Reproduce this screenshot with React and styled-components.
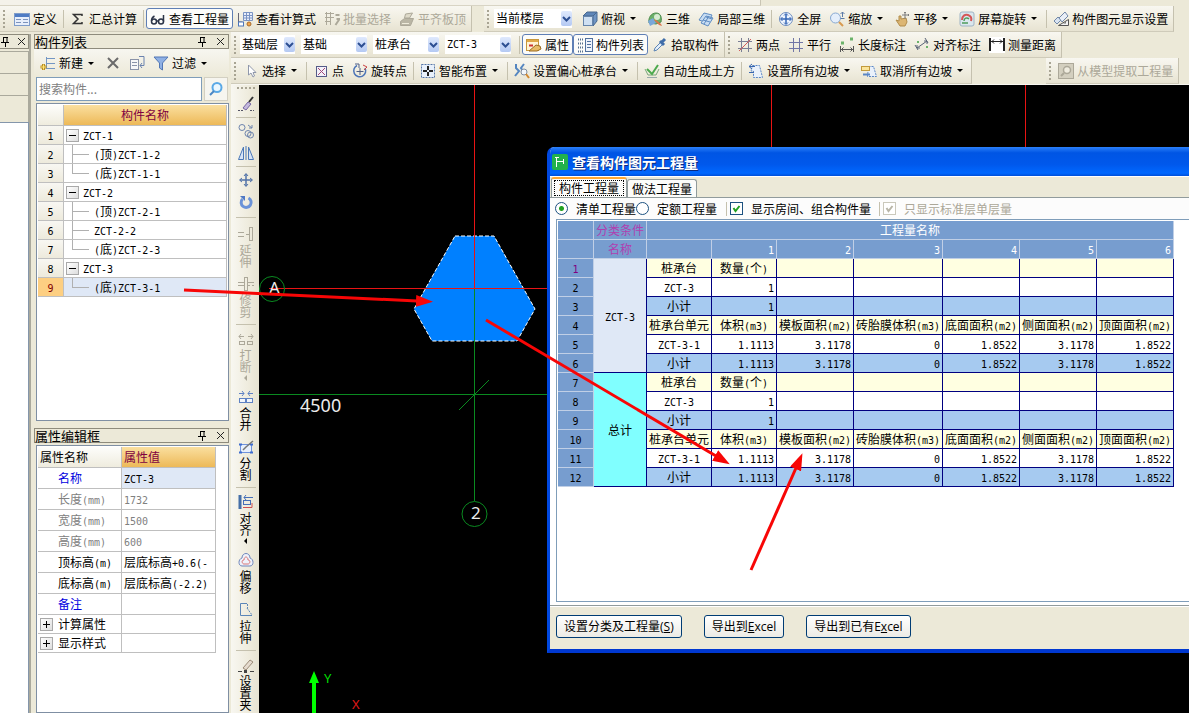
import { Fragment } from "react";
import styled, { createGlobalStyle, css } from "styled-components";

const GlobalStyle = createGlobalStyle`
  * {
    box-sizing: border-box;
  }

  body {
    margin: 0;
    overflow: hidden;
    background: #ece9d8;
    color: #000;
    font-family: "Noto Sans CJK SC", sans-serif;
    font-size: 12px;
    line-height: 16px;
  }

  button, input, select {
    font: inherit;
    color: inherit;
    margin: 0;
  }
`;

/*
  Text
*/
const Latin = styled.span`
  font-family: "DejaVu Sans Mono", monospace;
  font-size: 10px;
  line-height: 10px;
`;

// Latin runs get the half-width face, the rest stays in the CJK face
function Mixed({ text }) {
  return String(text)
    .split(/([\x20-\x7e]+)/)
    .filter(Boolean)
    .map((part, i) =>
      /^[\x20-\x7e]/.test(part) ? <Latin key={i}>{part}</Latin> : <Fragment key={i}>{part}</Fragment>
    );
}

/*
  Icons
*/
const glyphs = {
  define: (
    <>
      <rect x="0.5" y="2.5" width="15" height="12" fill="#e8effb" stroke="#7f9cc9" />
      <rect x="1" y="3" width="14" height="3" fill="#4f7cc4" />
      <path d="M2 8.5h5M2 11.5h5M9 8.5h5M9 11.5h5" stroke="#7d94bd" />
    </>
  ),
  sum: <path d="M12 5V3.5H3.5L8 8l-4.500 4.500H12V11" fill="none" stroke="#333" strokeWidth="1.500" />,
  glasses: (
    <g fill="none" stroke="#2c3548" strokeWidth="1.500">
      <circle cx="4" cy="10.500" r="2.500" />
      <circle cx="11" cy="10.500" r="2.500" />
      <path d="M1.500 10c0-3 1-4 3-5M13.500 10.500V4" />
      <path d="M6.500 10h2" />
    </g>
  ),
  formula: (
    <>
      <path d="M6.500 1.500h9v8h-9z" fill="#e9eefb" stroke="#7b94c4" />
      <path d="M6 4.500h9M6 7h9M9.500 1v8M12.500 1v8" stroke="#7b94c4" />
      <path d="M1.500 2v9h4" fill="none" stroke="#667" />
      <rect x="1.500" y="11" width="5" height="4" fill="#fff" stroke="#4c76bb" />
      <circle cx="12" cy="13" r="2" fill="#f2a54a" stroke="#a76a2c" />
    </>
  ),
  batch: (
    <g fill="none" stroke="#aca899">
      <path d="M1 2.500h9M1 6.500h9M1 10.500h6M2.500 1v13M6.500 1v13" />
      <path d="M11.500 4h4M12.500 8h3l-4 6" strokeWidth="2" />
    </g>
  ),
  slab: (
    <g fill="#bab6a5" stroke="#aca899">
      <path d="M1.500 10.500l4-3h9l-3 7h-10z" />
      <path d="M5.500 7l1-4 7-1-3 5z" fill="#dedac9" />
      <path d="M3 12.500h7" stroke="#efecdc" />
    </g>
  ),
  cube: (
    <>
      <path d="M1 5l4-4h10l-4 4z" fill="#5e86b8" stroke="#48688f" />
      <path d="M11 5l4-4v9l-4 5z" fill="#6f95c4" stroke="#48688f" />
      <rect x="1.500" y="5.500" width="9" height="9" fill="#cfe0f2" stroke="#6685ab" />
    </>
  ),
  view3d: (
    <>
      <path d="M2 12c-1-5 2-10 7-10s6 5 5 9l-5 2z" fill="#6bb06a" stroke="#4f8d50" />
      <path d="M1 10l5-3 3 5-6 3z" fill="#7aa7d9" />
      <path d="M8 8l6 5 1 2-3-1-5-5z" fill="#d9764d" />
      <circle cx="10" cy="6" r="3" fill="#d7ecd2" />
    </>
  ),
  part3d: (
    <g fill="#c7dcf2" stroke="#5f8cc2">
      <path d="M1 9l5-7 8 2-4 8z" />
      <path d="M3 12l5-7 7 2-5 8z" />
      <path d="M6 13l5-8M5 9l7 2M8 6l6 2" />
    </g>
  ),
  full: (
    <>
      <circle cx="8" cy="8" r="6.500" fill="#eef4fd" stroke="#6b8cc0" />
      <path d="M8 3v10M3 8h10" stroke="#3565b5" strokeWidth="1.500" />
      <path d="M6 4.500L8 2.500l2 2M6 11.500l2 2 2-2M4.500 6l-2 2 2 2M11.500 6l2 2-2 2" fill="none" stroke="#3565b5" />
    </>
  ),
  zoom: (
    <>
      <circle cx="6.500" cy="7" r="5" fill="#e4eefb" stroke="#88a9d2" />
      <path d="M10 11l4 4" stroke="#d89a50" strokeWidth="2" />
      <path d="M13.500 1v5M11.500 3l2-2 2 2M11.500 7.500h4" fill="none" stroke="#5c7ba8" />
    </>
  ),
  hand: (
    <>
      <path d="M2 9l3 1V5l2 0 0 3 5-1 1 4-2 4H6z" fill="#dcb673" stroke="#b28d4c" />
      <path d="M11 1v7M8 4h7M10 2l1-1 1 1M14 3l1 1-1 1" fill="none" stroke="#7c7c7c" />
    </>
  ),
  orbit: (
    <>
      <rect x="1" y="1" width="14" height="14" rx="2" fill="#dbe7ee" stroke="#9fb4c5" />
      <path d="M3 9c0-4 3-6 6-5s4 3 3 6" fill="none" stroke="#d45757" strokeWidth="2" />
      <path d="M5 10c0-3 3-4 5-2M9 12H3" fill="none" stroke="#4f9d5c" strokeWidth="1.500" />
    </>
  ),
  display: (
    <>
      <path d="M1 10l4-4 3 3-4 4z" fill="#d9e4f2" stroke="#7187a8" />
      <path d="M6 7l6-6 3 4-6 6z" fill="#e9eef6" stroke="#7187a8" />
      <path d="M5.500 14.500h10v-6z" fill="#f3f3f3" stroke="#555" />
      <path d="M10 12.500h3v-2z" fill="#777" />
    </>
  ),
  property: (
    <>
      <rect x="0.500" y="2.500" width="12" height="11" fill="#fff4d6" stroke="#c7973c" />
      <rect x="1" y="3" width="11" height="2" fill="#e0a94a" />
      <path d="M3 14l7-6 4 1 1 3-4 2z" fill="#e7bb67" stroke="#9b6b22" />
      <path d="M3 8.500h4" stroke="#c33" strokeWidth="2" />
    </>
  ),
  list: (
    <>
      <path d="M1 2.500h3M1 6.500h3M1 10.500h3M1 14.500h3M5 2.500h2M5 6.500h2M5 10.500h2M5 14.500h2" stroke="#56708f" strokeWidth="2" strokeDasharray="1 1" />
      <rect x="8.500" y="1.500" width="7" height="13" fill="#eef3fb" stroke="#51719f" />
      <path d="M10 4.500h4M10 7.500h4M10 10.500h4" stroke="#51719f" />
    </>
  ),
  dropper: (
    <>
      <path d="M2 14l1-3 6-6 2 2-6 6z" fill="#e3eefa" stroke="#5d85b5" />
      <path d="M8 4l4 4M10 5l3-3" stroke="#3f6da9" strokeWidth="3" />
    </>
  ),
  twoPoint: (
    <>
      <path d="M4.500 1v14M11.500 1v14M1 4.500h14M1 11.500h14" stroke="#7b7f95" />
      <path d="M2 14L14 2" stroke="#d35c5c" />
    </>
  ),
  parallel: <path d="M5.500 1v14M11.500 1v14M1 5.500h14M1 11.500h14" stroke="#7176a6" />,
  length: (
    <>
      <path d="M2 6h3M11 2h3" stroke="#6bb36b" strokeWidth="3" />
      <path d="M1.500 9v6M14.500 9v6M2 12.500h12M4.500 10.500l-2 2 2 2M11.500 10.500l2 2-2 2" fill="none" stroke="#555" />
    </>
  ),
  aligned: (
    <>
      <path d="M3 5h2M12 10h2" stroke="#6bb36b" strokeWidth="2" />
      <path d="M1 8l3 5M11 1l3 5M3 11l10-7M3 8v3h3M10 4h3v3" fill="none" stroke="#5a6478" />
    </>
  ),
  measure: (
    <>
      <rect width="16" height="16" fill="#fff" />
      <path d="M1 1v13M15 1v13" stroke="#222" strokeWidth="2" />
      <path d="M2 4.500h12M5 2.500l-2 2 2 2M11 2.500l2 2-2 2" fill="none" stroke="#222" />
    </>
  ),
  cursor: <path d="M5.500 2v10l2.500-2 2 4 1.500-1-1.500-3.500h3z" fill="#fff" stroke="#8f97ab" />,
  point: (
    <>
      <rect x="3.500" y="3.500" width="10" height="10" fill="#f4f1fa" stroke="#555b88" />
      <path d="M5 5l7 7M12 5l-7 7" stroke="#a04a78" />
    </>
  ),
  rotatePoint: (
    <>
      <path d="M5 2.500A6 6 0 1 0 13 5" fill="none" stroke="#4c74b7" strokeWidth="1.500" />
      <path d="M3 1h4v4M8 5v7M4.500 8.500h7" fill="none" stroke="#4e5e86" />
      <path d="M11 2l4 2-3 3" fill="none" stroke="#c44" />
    </>
  ),
  smart: (
    <>
      <rect x="1.500" y="1.500" width="13" height="13" fill="#e8f0fb" stroke="#5676a8" strokeDasharray="2 1" />
      <path d="M8 3v4M8 9v4M3 8h4M9 8h4" stroke="#222" strokeWidth="2" />
    </>
  ),
  eccentric: (
    <>
      <path d="M2 1v4l3 3-4 5M10 1L7 5l2 3" fill="none" stroke="#5586c0" strokeWidth="2" />
      <circle cx="10" cy="9" r="3" fill="#f3f7fb" stroke="#7f8da0" />
      <path d="M12 11l3 4" stroke="#d4892f" strokeWidth="2" />
    </>
  ),
  earth: (
    <>
      <path d="M1 6l3 6h8l3-6" fill="none" stroke="#7aa67a" />
      <path d="M3 6l5 5 6-9" fill="none" stroke="#4caa4d" strokeWidth="2" />
      <path d="M3 14.500h10" stroke="#9aa" />
    </>
  ),
  slopeSet: (
    <>
      <path d="M4.500 2.500h7l3 12h-9V8H3z" fill="#eaf1fb" stroke="#5a86c6" strokeDasharray="2 1" />
      <path d="M1 3.500h6M1 9.500h5M4 1L1 3.500 4 6" fill="none" stroke="#3a67b0" />
    </>
  ),
  slopeClear: (
    <>
      <path d="M7.500 3.500h5l3 10h-9z" fill="#eaf1fb" stroke="#5a86c6" strokeDasharray="2 1" />
      <rect x="0.500" y="3.500" width="8" height="4" fill="#fbe59a" stroke="#c29a3d" />
      <path d="M2 11.500h7" stroke="#5a86c6" strokeWidth="2" />
    </>
  ),
  extract: (
    <g fill="none" stroke="#aca899">
      <rect x="0.500" y="0.500" width="15" height="15" fill="#d3cfbf" />
      <circle cx="9" cy="7" r="3.500" fill="#efecdf" strokeWidth="1.500" />
      <path d="M6 10l-3 3" strokeWidth="2" />
    </g>
  ),
  add: (
    <>
      <path d="M7 3.500h8M7 8.500h8M7 13.500h8M6.500 2v12" stroke="#7396c4" />
      <path d="M3.500 9v6M0.500 12h6" stroke="#b88e22" strokeWidth="3" />
      <path d="M3.500 9.500v5M1 12h5" stroke="#ffe477" />
    </>
  ),
  remove: <path d="M3 3l10 10M13 3L3 13" stroke="#6b6b6b" strokeWidth="2" />,
  copyTo: (
    <>
      <rect x="1.500" y="4.500" width="8" height="10" fill="#f7f7f7" stroke="#8a93a8" />
      <path d="M3 7.500h5M3 10.500h5" stroke="#8a93a8" />
      <path d="M10 1.500h5v9h-4M13 8l-2 2.500 2 2.500" fill="none" stroke="#6b83af" />
    </>
  ),
  funnel: <path d="M1 2h14L9.500 8v7l-3-2V8z" fill="#8fb0e4" stroke="#5277b5" />,
  search: (
    <>
      <circle cx="9" cy="6.500" r="4.500" fill="#eaf7ff" stroke="#5aa9e6" strokeWidth="2" />
      <path d="M6 10l-4 4" stroke="#4b86c4" strokeWidth="2" />
    </>
  ),
  brush: (
    <>
      <path d="M0 14.500h5M12 14.500h4" stroke="#556" strokeDasharray="2 1" />
      <path d="M5 12l5-6 3 2-5 6z" fill="#c5b9de" stroke="#7566a2" />
      <path d="M11 6l4-5" stroke="#333" strokeWidth="2" />
    </>
  ),
  duplicate: (
    <g fill="none" stroke="#6d84ad">
      <circle cx="4" cy="4.500" r="3" />
      <circle cx="10" cy="10.500" r="3" />
      <circle cx="12.500" cy="12" r="3" />
      <path d="M10 2l4 3M14 2v3h-3" />
    </g>
  ),
  mirror: (
    <g fill="#d7e4f6" stroke="#4a78b8">
      <path d="M5.500 2v12.500h-5z" />
      <path d="M10.500 2v12.500h5z" />
      <path d="M8 1v14" />
    </g>
  ),
  move: (
    <g fill="none" stroke="#5273a8">
      <path d="M8 2v12M2 8h12" strokeWidth="1.500" />
      <path d="M6 4l2-2.500L10 4M6 12l2 2.500 2-2.500M4 6L1.500 8 4 10M12 6l2.500 2L12 10" />
    </g>
  ),
  rotate: (
    <>
      <path d="M4.500 5a5 5 0 1 0 6-1" fill="none" stroke="#6b93d8" strokeWidth="3" />
      <path d="M2 2h5v5z" fill="#4f78c4" />
    </>
  ),
  extend: (
    <g fill="none" stroke="#aca899">
      <path d="M0 6.500h6M0 10.500h6M8 8.500h3" />
      <rect x="11.500" y="1.500" width="3" height="13" />
    </g>
  ),
  trim: (
    <g fill="none" stroke="#aca899">
      <rect x="6.500" y="1.500" width="3" height="13" />
      <path d="M0 6.500h6M0 9.500h6M10 6.500h6M10 9.500h2M14 9.500h2" />
    </g>
  ),
  breakUp: (
    <g fill="none" stroke="#aca899">
      <path d="M1 5.500h5M3 3L1 5.500 3 8M10 5.500h5M13 3l2 2.500L13 8" />
      <rect x="1.500" y="10.500" width="5" height="3" />
      <rect x="9.500" y="10.500" width="5" height="3" />
    </g>
  ),
  merge: (
    <g fill="none" stroke="#5f82c4">
      <path d="M1 4.500h5M4 2l2 2.500L4 7M10 4.500h5M12 2l-2 2.500L12 7" />
      <rect x="1.500" y="9.500" width="6" height="4" fill="#f2f6fc" />
      <rect x="8.500" y="9.500" width="6" height="4" fill="#f2f6fc" />
    </g>
  ),
  split: (
    <>
      <path d="M2.500 5.500h11v8h-11z" fill="#e7effc" stroke="#6f92dc" />
      <path d="M1 5.500h3M12 5.500h3M1 13.500h3M12 13.500h3" stroke="#3d6cd0" strokeWidth="2" />
      <path d="M5 11l3-3 7-6" fill="none" stroke="#777" strokeWidth="1.500" />
    </>
  ),
  align: (
    <>
      <path d="M2 1v14" stroke="#456fa8" strokeWidth="3" />
      <rect x="5.500" y="6.500" width="7" height="4" fill="none" stroke="#456fb8" />
      <path d="M15 3.500H6M8 1L6 3.500 8 6" fill="none" stroke="#456fb8" />
      <path d="M5 13.500h9V9" fill="none" stroke="#cf5151" />
    </>
  ),
  offset: (
    <g fill="none">
      <path d="M4 6c0-6 8-6 8 0 4 1 4 8 0 8H4c-4 0-4-7 0-8z" fill="#eef2fb" stroke="#6e86bb" />
      <path d="M6 8c0-4 4-4 4 0 3 0 2 4 0 4H6c-2 0-3-4 0-4z" stroke="#da7777" />
    </g>
  ),
  stretch: (
    <g fill="none" stroke="#5b86b8">
      <path d="M9 1.500H2.500v12H14" />
      <path d="M9.500 2v4M9 6l5 7" strokeDasharray="2 1" />
    </g>
  ),
  grip: (
    <>
      <path d="M5 11l7-8 3 2-7 8z" fill="#e6dccf" stroke="#9b8b78" />
      <path d="M0 14.500h4M12 14.500h4" stroke="#444" />
      <rect x="6" y="13" width="3" height="3" fill="#444" />
    </>
  ),
  pin: <path d="M3 1.500h5M3.500 1v5M7 1v5M1 6.500h8M5.500 7v4" fill="none" stroke="#000" />,
  close: <path d="M2 2l7 7M9 2L2 9" stroke="#222" />,
};

const Svg = styled.svg`
  display: block;
  flex: none;
`;

function Icon({ name, size = 16, box = 16 }) {
  return (
    <Svg width={size} height={size} viewBox={`0 0 ${box} ${box}`} aria-hidden="true">
      {glyphs[name]}
    </Svg>
  );
}

/*
  Frame of the window
*/
const Page = styled.div`
  display: flex;
  flex-direction: column;
  height: 100vh;
  background: #ece9d8;
`;

const TopEdge = styled.div`
  flex: none;
  width: 64%;
  height: 6px;
  background: #f4f2ea;
  border-right: 1px solid #c9c5b4;
  border-bottom: 1px solid #d8d4c4;
`;

const ToolRow = styled.div`
  display: flex;
  flex: none;
  gap: ${(p) => p.$gap || 0}px;
  height: 26px;
  white-space: nowrap;
`;

const Toolbar = styled.div`
  display: flex;
  align-items: center;
  flex: none;
  padding-right: 1px;
  background: linear-gradient(#f8f7f1, #efecde 60%, #e7e3d2);
  border-right: 1px solid #c5c1af;
  border-bottom: 1px solid #cfcbba;
`;

const Grip = styled.span`
  flex: none;
  width: 2px;
  height: 18px;
  margin: 0 ${(p) => p.$after ?? 3}px 0 3px;
  background: repeating-linear-gradient(#a8a493 0 2px, transparent 2px 4px);
`;

const ToolButton = styled.button`
  display: flex;
  align-items: center;
  flex: none;
  gap: 3px;
  height: 21px;
  padding: 0 4px;
  border: 0;
  background: none;

  &:disabled {
    color: #aca899;
  }

  ${(p) =>
    p.$pressed &&
    css`
      padding: 0 3px;
      border: 1px solid #5f7fb5;
      border-radius: 3px;
      background: #fcfcfa;
    `}
`;

const Caret = styled.span`
  flex: none;
  width: 0;
  margin: 0 3px 0 2px;
  border: 3px solid transparent;
  border-top-color: #000;
  border-bottom-width: 0;
`;

const Divider = styled.span`
  flex: none;
  width: 1px;
  height: 18px;
  margin: 0 2px;
  background: #c5c1ae;
`;

const Combo = styled.span`
  display: grid;
  flex: none;
  width: ${(p) => p.$width}px;
  height: 19px;
  margin-right: 6px;
  background: #fff;
`;

const ComboSelect = styled.select`
  grid-area: 1 / 1;
  appearance: none;
  min-width: 0;
  padding: 0 12px 0 2px;
  border: 0;
  border-radius: 0;
  background: none;
  font-family: "DejaVu Sans Mono", "Noto Sans CJK SC", sans-serif;
  font-size: ${(p) => (p.$latin ? 10 : 12)}px;
  line-height: 18px;
`;

const ComboArrow = styled.span`
  grid-area: 1 / 1;
  display: grid;
  place-items: center;
  align-self: center;
  justify-self: end;
  width: 11px;
  height: 15px;
  border-radius: 2px;
  background: linear-gradient(#dfe9fd, #b4c9f3);
  pointer-events: none;
`;

function Tool({ icon, label, caret, pressed, disabled }) {
  return (
    <ToolButton type="button" $pressed={pressed} disabled={disabled}>
      <Icon name={icon} />
      {label}
      {caret && <Caret />}
    </ToolButton>
  );
}

function Dropdown({ value, width, label, latin }) {
  return (
    <Combo $width={width}>
      <ComboSelect aria-label={label} $latin={latin} defaultValue={value}>
        <option>{value}</option>
      </ComboSelect>
      <ComboArrow>
        <Svg width="9" height="8" viewBox="0 0 9 8">
          <path d="M1 2l3.500 3.500L8 2" fill="none" stroke="#2d4f92" strokeWidth="2" />
        </Svg>
      </ComboArrow>
    </Combo>
  );
}

/*
  Docked panels on the left
*/
const Workspace = styled.div`
  display: flex;
  flex: 1;
  min-height: 0;
`;

const Sliver = styled.div`
  display: flex;
  flex-direction: column;
  flex: none;
  width: 31px;
  margin: 2px 3px 0 0;
  border-right: 2px solid #aaa99c;
`;

const SliverHead = styled.div`
  display: flex;
  align-items: center;
  gap: 5px;
  height: 15px;
  border: 1px solid #8e8b7c;
  border-left: 0;
`;

const SliverCell = styled.div`
  height: ${(p) => p.$height}px;
  border: solid #aaa99c;
  border-width: 1px 1px 0 0;
`;

const SliverBody = styled.div`
  flex: 1;
  background: #fff;
  border: solid #8496ab;
  border-width: 1px 1px 0 0;
`;

const Docks = styled.div`
  display: flex;
  flex-direction: column;
  flex: none;
  width: 195px;
  margin: 2px 2px 0 0;
`;

const DockHead = styled.div`
  display: flex;
  align-items: center;
  flex: none;
  gap: 6px;
  height: 15px;
  padding: 0 2px 0 0;
  border: 1px solid #8e8b7c;
`;

const DockTitle = styled.h2`
  flex: 1;
  margin: 0;
  font-size: 13px;
  font-weight: 400;
  line-height: 13px;
`;

const HeadButton = styled.button`
  display: grid;
  place-items: center;
  width: 12px;
  height: 13px;
  padding: 0;
  border: 0;
  background: none;
`;

const DockTools = styled.div`
  display: flex;
  align-items: center;
  flex: none;
  height: 28px;
  padding-left: 2px;
  background: linear-gradient(#f7f6f0, #ece9d8);
`;

const SearchRow = styled.div`
  display: flex;
  flex: none;
  gap: 2px;
  height: 24px;
  margin: 0 1px 2px 2px;
`;

const SearchInput = styled.input`
  flex: 1;
  min-width: 0;
  padding: 0 2px;
  border: 1px solid #7f9db9;
  background: #fff;
  line-height: 20px;

  &::placeholder {
    color: #808080;
    opacity: 1;
  }
`;

const SearchButton = styled.button`
  display: grid;
  place-items: center;
  width: 24px;
  padding: 0;
  border: 1px solid #d3d0c2;
  background: #f6f5ef;
`;

const Sheet = styled.div`
  flex: ${(p) => (p.$fill ? "1" : "0 0 318px")};
  margin: 0 0 0 2px;
  padding: 1px;
  border: 1px solid #7f8fa3;
  background: #fff;
`;

const SheetTable = styled.table`
  width: ${(p) => p.$width || "100%"};
  table-layout: fixed;
  border-spacing: 0;
`;

const cellBase = css`
  height: 19px;
  padding: 0 2px;
  border: solid #bfbfbf;
  border-width: 0 1px 1px 0;
  font-weight: 400;
  line-height: 16px;
  white-space: nowrap;
  overflow: hidden;
`;

const HeadCell = styled.th`
  ${cellBase}
  height: 21px;
  text-align: ${(p) => p.$align || "center"};
  color: ${(p) => (p.$gold ? "#800040" : "#000")};
  background: ${(p) =>
    p.$gold ? "linear-gradient(#fadf9f, #edb958)" : "linear-gradient(#fdfdfb, #efecde)"};
`;

const RowNumber = styled.th`
  ${cellBase}
  text-align: center;
  color: ${(p) => (p.$current ? "#800000" : "#000")};
  background: ${(p) => (p.$current ? "#fdcf82" : "linear-gradient(#f8f7f2, #edeadc)")};
`;

const TreeCell = styled.td`
  ${cellBase}
  background: ${(p) => (p.$current ? "#dfe8f6" : "#fff")};
`;

const TreeLine = styled.div`
  display: flex;
  align-items: center;
  height: 18px;
`;

const Toggle = styled.button`
  display: grid;
  place-items: center;
  flex: none;
  width: 13px;
  height: 13px;
  padding: 0;
  margin-right: ${(p) => p.$after}px;
  border: 1px solid #a9a9a9;
  background: linear-gradient(135deg, #fff, #dedede);
`;

const PropName = styled.th`
  ${cellBase}
  height: ${(p) => (p.$group ? 19 : 21)}px;
  padding-left: ${(p) => (p.$group ? 2 : 20)}px;
  text-align: left;
  color: ${(p) => p.$color || "#000"};
`;

const PropValue = styled.td`
  ${cellBase}
  color: ${(p) => p.$color || "#000"};
  background: ${(p) => (p.$current ? "#dfe8f6" : "#fff")};
`;

const tree = [
  { text: "ZCT-1", parent: true },
  { text: "(顶)ZCT-1-2" },
  { text: "(底)ZCT-1-1", last: true },
  { text: "ZCT-2", parent: true },
  { text: "(顶)ZCT-2-1" },
  { text: "ZCT-2-2" },
  { text: "(底)ZCT-2-3", last: true },
  { text: "ZCT-3", parent: true },
  { text: "(底)ZCT-3-1", last: true, current: true },
];

const properties = [
  { name: "名称", value: "ZCT-3", color: "#0000e0", current: true },
  { name: "长度(mm)", value: "1732", color: "#808080", valueColor: "#808080" },
  { name: "宽度(mm)", value: "1500", color: "#808080", valueColor: "#808080" },
  { name: "高度(mm)", value: "600", color: "#808080", valueColor: "#808080" },
  { name: "顶标高(m)", value: "层底标高+0.6(-" },
  { name: "底标高(m)", value: "层底标高(-2.2)" },
  { name: "备注", value: "", color: "#0000e0" },
  { name: "计算属性", value: "", group: true },
  { name: "显示样式", value: "", group: true },
];

function DockHeader({ title }) {
  return (
    <DockHead>
      <DockTitle>{title}</DockTitle>
      <HeadButton type="button" aria-label={`固定${title}`}>
        <Icon name="pin" size={11} box={11} />
      </HeadButton>
      <HeadButton type="button" aria-label={`关闭${title}`}>
        <Icon name="close" size={11} box={11} />
      </HeadButton>
    </DockHead>
  );
}

function ComponentList() {
  return (
    <>
      <DockHeader title="构件列表" />
      <DockTools>
        <Tool icon="add" label="新建" caret />
        <ToolButton type="button" aria-label="删除">
          <Icon name="remove" />
        </ToolButton>
        <ToolButton type="button" aria-label="复制">
          <Icon name="copyTo" />
        </ToolButton>
        <Tool icon="funnel" label="过滤" caret />
      </DockTools>
      <SearchRow>
        <SearchInput type="text" placeholder="搜索构件..." aria-label="搜索构件" />
        <SearchButton type="button" aria-label="搜索">
          <Icon name="search" />
        </SearchButton>
      </SearchRow>
      <Sheet>
        <SheetTable>
          <colgroup>
            <col style={{ width: 26 }} />
            <col />
          </colgroup>
          <thead>
            <tr>
              <HeadCell />
              <HeadCell $gold>构件名称</HeadCell>
            </tr>
          </thead>
          <tbody>
            {tree.map((row, i) => (
              <tr key={row.text}>
                <RowNumber $current={row.current}>
                  <Mixed text={i + 1} />
                </RowNumber>
                <TreeCell $current={row.current}>
                  <TreeLine>
                    {row.parent ? (
                      <Toggle type="button" $after={4} aria-label={`折叠${row.text}`}>
                        <Svg width="7" height="7">
                          <path d="M0 3.500h7" stroke="#000" />
                        </Svg>
                      </Toggle>
                    ) : (
                      <Svg width="28" height="18">
                        <path d={`M6.500 0V${row.last ? 9 : 18}M6 9.500h17`} stroke="#b0b0b0" />
                      </Svg>
                    )}
                    <span>
                      <Mixed text={row.text} />
                    </span>
                  </TreeLine>
                </TreeCell>
              </tr>
            ))}
          </tbody>
        </SheetTable>
      </Sheet>
    </>
  );
}

const DockGap = styled.div`
  flex: none;
  height: ${(p) => p.$height}px;
`;

function PropertyEditor() {
  return (
    <>
      <DockHeader title="属性编辑框" />
      <DockGap $height={2} />
      <Sheet $fill>
        <SheetTable $width="178px">
          <colgroup>
            <col style={{ width: 84 }} />
            <col />
          </colgroup>
          <thead>
            <tr>
              <HeadCell $align="left">属性名称</HeadCell>
              <HeadCell $gold $align="left">属性值</HeadCell>
            </tr>
          </thead>
          <tbody>
            {properties.map((row) => (
              <tr key={row.name}>
                <PropName $group={row.group} $color={row.color}>
                  <TreeLine>
                    {row.group && (
                      <Toggle type="button" $after={5} aria-label={`展开${row.name}`}>
                        <Svg width="7" height="7">
                          <path d="M0 3.500h7M3.500 0v7" stroke="#000" />
                        </Svg>
                      </Toggle>
                    )}
                    <span>
                      <Mixed text={row.name} />
                    </span>
                  </TreeLine>
                </PropName>
                <PropValue $color={row.valueColor} $current={row.current}>
                  <Mixed text={row.value} />
                </PropValue>
              </tr>
            ))}
          </tbody>
        </SheetTable>
      </Sheet>
    </>
  );
}

/*
  Vertical edit toolbar
*/
const Main = styled.div`
  display: flex;
  flex-direction: column;
  flex: 1;
  min-width: 0;
`;

const Stage = styled.div`
  display: flex;
  flex: 1;
  min-height: 0;
  border-top: 1px solid #f8f7f1;
`;

const SideBar = styled.div`
  display: flex;
  flex-direction: column;
  align-items: center;
  flex: none;
  width: 28px;
  padding-left: 1px;
  overflow: hidden;
  background: linear-gradient(90deg, #f8f7f1, #efecde 60%, #e7e3d2);
`;

const SideGrip = styled.span`
  flex: none;
  width: 18px;
  height: 2px;
  margin: 2px 0 4px;
  background: repeating-linear-gradient(90deg, #a8a493 0 2px, transparent 2px 4px);
`;

const SideButton = styled.button`
  display: flex;
  flex-direction: column;
  align-items: center;
  flex: none;
  gap: 2px;
  padding: ${(p) => (p.$plain ? 3 : 4)}px 0;
  border: 0;
  background: none;

  &:disabled {
    color: #aca899;
  }
`;

const SideLabel = styled.span`
  width: 12px;
  line-height: 12px;
  white-space: normal;
  word-break: break-all;
`;

const SideCaret = styled.span`
  width: 0;
  border: 3px solid transparent;
  border-right-color: currentColor;
  border-left-width: 0;
`;

const SideDivider = styled.span`
  flex: none;
  width: 20px;
  height: 1px;
  margin: ${(p) => (p.$roomy ? 4 : 2)}px 0;
  background: #c5c1ae;
`;

const sideTools = [
  { tools: [{ icon: "brush", title: "格式刷" }] },
  { tools: [{ icon: "duplicate", title: "复制" }, { icon: "mirror", title: "镜像" }] },
  { tools: [{ icon: "move", title: "移动" }, { icon: "rotate", title: "旋转" }] },
  {
    roomy: true,
    tools: [
      { icon: "extend", label: "延伸", disabled: true },
      { icon: "trim", label: "修剪", disabled: true },
    ],
  },
  {
    tools: [
      { icon: "breakUp", label: "打断", disabled: true, caret: true },
      { icon: "merge", label: "合并" },
      { icon: "split", label: "分割" },
    ],
  },
  {
    tools: [
      { icon: "align", label: "对齐", caret: true },
      { icon: "offset", label: "偏移" },
      { icon: "stretch", label: "拉伸" },
    ],
  },
  { tools: [{ icon: "grip", label: "设置夹" }] },
];

function EditTools() {
  return (
    <SideBar>
      <SideGrip />
      {sideTools.map((group, i) => (
        <Fragment key={i}>
          {i > 0 && <SideDivider $roomy={group.roomy} />}
          {group.tools.map((tool) => (
            <SideButton
              key={tool.icon}
              type="button"
              disabled={tool.disabled}
              aria-label={tool.title}
              $plain={!tool.label}
            >
              <Icon name={tool.icon} />
              {tool.label && <SideLabel>{tool.label}</SideLabel>}
              {tool.caret && <SideCaret />}
            </SideButton>
          ))}
        </Fragment>
      ))}
    </SideBar>
  );
}

/*
  Drawing area
*/
const Canvas = styled.div`
  position: relative;
  flex: 1;
  min-width: 0;
  overflow: hidden;
  background: #000;
`;

const Drawing = styled.svg`
  display: block;
  width: 100%;
  height: 100%;
  font-family: "Noto Sans", sans-serif;
  font-size: 18px;
`;

function Plan() {
  return (
    <Drawing>
      <polygon
        points="196,151 235,151 276,224 258,256 173,256 155,224"
        fill="#0080ff"
        stroke="#fff"
        strokeDasharray="4 2"
      />
      <g fill="#e81414">
        <rect x="215" y="0" width="1" height="203" />
        <rect x="512" y="0" width="1" height="203" />
        <rect x="766" y="0" width="1" height="203" />
        <rect x="10" y="203" width="920" height="1" />
      </g>
      <g fill="#0a8a20">
        <rect x="215" y="204" width="1" height="212" />
        <rect x="0" y="309" width="930" height="1" />
      </g>
      <g stroke="#0a8a20" fill="none">
        <path d="M200 325l30-30" />
        <circle cx="13" cy="204" r="12.500" />
        <circle cx="215.500" cy="429" r="12.500" />
      </g>
      <g fill="#ececec">
        <text x="10" y="209" fontSize="17">A</text>
        <text x="212" y="434" fontSize="17">2</text>
        <text x="41" y="327">4500</text>
      </g>
      <path d="M53 640v-42h-3l5-12 5 12h-3v42z" fill="#0f0" />
      <text x="65" y="598" fontSize="13" fill="#0d0">Y</text>
      <text x="93" y="624" fontSize="13" fill="#e01818">X</text>
    </Drawing>
  );
}

/*
  Quantity dialog
*/
const Dialog = styled.section`
  position: absolute;
  top: 62px;
  left: 288px;
  right: 0;
  border-left: 3px solid #0048e0;
  border-bottom: 4px solid #0038d0;
  border-radius: 7px 0 0 0;
  background: #ece9d8;
  overflow: hidden;
  white-space: nowrap;
`;

const DialogTitle = styled.h1`
  display: flex;
  align-items: center;
  gap: 4px;
  height: 29px;
  margin: 0;
  padding-left: 2px;
  background: linear-gradient(#2b80fa, #0055e4 20%, #0058ec 60%, #0068ff 90%, #004fd8);
  color: #fff;
  font-size: 14px;
  font-weight: 700;
  text-shadow: 1px 1px #0a2a80;
`;

const Tabs = styled.div`
  display: flex;
  align-items: flex-end;
  height: 22px;
  padding-left: 1px;
  border-top: 1px solid #fff;
  border-bottom: 1px solid #919b9c;
`;

const Tab = styled.button`
  height: ${(p) => (p.$active ? 20 : 18)}px;
  padding: ${(p) => (p.$active ? "0 2px 1px" : "0 4px")};
  border: 1px solid #919b9c;
  border-bottom: 0;
  border-radius: 3px 3px 0 0;
  background: #fcfcfa;
  line-height: 14px;

  ${(p) =>
    p.$active &&
    css`
      border-top: 2px solid #ffa834;
    `}
`;

const TabText = styled.span`
  display: block;
  padding: 0 ${(p) => (p.$active ? 4 : 0)}px;
  border: ${(p) => (p.$active ? "1px dotted #000" : "0")};
`;

const Options = styled.div`
  display: flex;
  align-items: center;
  height: 21px;
  padding-left: 5px;
  background: #fcfcfc;
`;

const Choice = styled.label`
  display: flex;
  align-items: center;
  gap: 8px;
  padding-right: ${(p) => p.$after || 0}px;
  color: ${(p) => (p.$muted ? "#aca899" : "#000")};
`;

const Radio = styled.input`
  appearance: none;
  width: 13px;
  height: 13px;
  border: 1px solid #1c5180;
  border-radius: 50%;
  background: #fff;

  &:checked {
    background: radial-gradient(circle, #21a121 0 2px, #fff 3px);
  }
`;

const CheckMark = styled.span`
  display: grid;

  & > * {
    grid-area: 1 / 1;
  }

  & > svg {
    pointer-events: none;
  }
`;

const Check = styled.input`
  appearance: none;
  width: 13px;
  height: 13px;
  border: 1px solid #1c5180;
  background: #fff;

  &:disabled {
    border-color: #cac8bb;
  }
`;

const OptionDivider = styled.span`
  width: 1px;
  height: 14px;
  margin-right: 3px;
  background: #c5c1ae;
`;

const GridFrame = styled.div`
  margin-left: 6px;
  padding: 1px 1px 114px;
  border: solid #7f9db9;
  border-width: 1px 0 1px 1px;
  background: #fff;
`;

const FrameArea = styled.div`
  padding-bottom: 3px;
  border-bottom: 1px solid #919b9c;
  background: #fff;
`;

const Quantities = styled.table`
  width: 616px;
  table-layout: fixed;
  border-spacing: 0;
  line-height: 16px;
`;

const quantityCell = css`
  height: 19px;
  padding: 0 2px;
  font-weight: 400;
  overflow: hidden;
`;

const BlueCell = styled.th`
  ${quantityCell}
  border: solid #c0cfe6;
  border-width: 0 1px 1px 0;
  background: #779dcf;
  color: ${(p) => p.$color || "#fff"};
  text-align: ${(p) => p.$align || "center"};
`;

const GroupCell = styled.th`
  ${quantityCell}
  border: solid #000080;
  border-width: 0 1px 1px 0;
  background: ${(p) => (p.$total ? "#80ffff" : "#dfe8f6")};
`;

const kinds = {
  head: "#ffffe1",
  data: "#fff",
  sum: "#a6caf0",
};

const QuantityCell = styled.td`
  ${quantityCell}
  border: solid #000080;
  border-width: 0 1px 1px 0;
  background: ${(p) => kinds[p.$kind]};
  text-align: ${(p) => (p.$right ? "right" : "center")};
`;

const Footer = styled.div`
  display: flex;
  gap: 22px;
  height: 43px;
  padding: 8px 6px;
  border-top: 1px solid #fff;
`;

const PushButton = styled.button`
  height: 23px;
  padding: 0 7px;
  border: 1px solid #003c74;
  border-radius: 3px;
  background: linear-gradient(#fff, #ecebe5);
  font-family: "Open Sans", "Noto Sans CJK SC", sans-serif;
  line-height: 18px;
`;

const columns = [36, 53, 65, 65, 77, 89, 77, 77, 77];

const units = ["桩承台单元", "体积(m3)", "模板面积(m2)", "砖胎膜体积(m3)", "底面面积(m2)", "侧面面积(m2)", "顶面面积(m2)"];
const amounts = ["1.1113", "3.1178", "0", "1.8522", "3.1178", "1.8522"];

const block = [
  { kind: "head", cells: ["桩承台", "数量(个)", "", "", "", "", ""] },
  { kind: "data", cells: ["ZCT-3", "1", "", "", "", "", ""] },
  { kind: "sum", cells: ["小计", "1", "", "", "", "", ""] },
  { kind: "head", cells: units },
  { kind: "data", cells: ["ZCT-3-1", ...amounts] },
  { kind: "sum", cells: ["小计", ...amounts] },
];

const groups = [
  { name: "ZCT-3", rows: block },
  { name: "总计", rows: block, total: true },
];

function QuantityTable() {
  return (
    <Quantities>
      <colgroup>
        {columns.map((width, i) => (
          <col key={i} style={{ width }} />
        ))}
      </colgroup>
      <thead>
        <tr>
          <BlueCell />
          <BlueCell $color="#b03fb0">分类条件</BlueCell>
          <BlueCell colSpan={7}>工程量名称</BlueCell>
        </tr>
        <tr>
          <BlueCell />
          <BlueCell $color="#b03fb0">名称</BlueCell>
          <BlueCell />
          {[1, 2, 3, 4, 5, 6].map((n) => (
            <BlueCell key={n} $align="right">
              <Mixed text={n} />
            </BlueCell>
          ))}
        </tr>
      </thead>
      <tbody>
        {groups.map((group, g) =>
          group.rows.map((row, r) => {
            const number = g * 6 + r + 1;
            return (
              <tr key={number}>
                <BlueCell $color={number === 1 ? "#800080" : "#000"}>
                  <Mixed text={number} />
                </BlueCell>
                {r === 0 && (
                  <GroupCell rowSpan={6} $total={group.total}>
                    <Mixed text={group.name} />
                  </GroupCell>
                )}
                {row.cells.map((cell, c) => (
                  <QuantityCell key={c} $kind={row.kind} $right={c > 0 && row.kind !== "head"}>
                    <Mixed text={cell} />
                  </QuantityCell>
                ))}
              </tr>
            );
          })
        )}
      </tbody>
    </Quantities>
  );
}

function Tick({ color }) {
  return (
    <Svg width="13" height="13">
      <path d="M3.500 6l2 3 4-5" fill="none" stroke={color} strokeWidth="2" />
    </Svg>
  );
}

function QuantityDialog() {
  return (
    <Dialog>
      <DialogTitle>
        <Svg width="16" height="16">
          <rect width="16" height="16" rx="2" fill="#22b14c" />
          <path d="M4.500 3v10M5 7.500h7M11.500 5v5M3 3.500h4" fill="none" stroke="#fff" />
        </Svg>
        查看构件图元工程量
      </DialogTitle>
      <Tabs>
        <Tab type="button" $active>
          <TabText $active>构件工程量</TabText>
        </Tab>
        <Tab type="button">
          <TabText>做法工程量</TabText>
        </Tab>
      </Tabs>
      <FrameArea>
        <Options>
          <Choice>
            <Radio type="radio" name="mode" defaultChecked />
            清单工程量
          </Choice>
          <Choice $after={9}>
            <Radio type="radio" name="mode" />
            定额工程量
          </Choice>
          <OptionDivider />
          <Choice $after={8}>
            <CheckMark>
              <Check type="checkbox" defaultChecked />
              <Tick color="#21a121" />
            </CheckMark>
            显示房间、组合构件量
          </Choice>
          <OptionDivider />
          <Choice $muted>
            <CheckMark>
              <Check type="checkbox" defaultChecked disabled />
              <Tick color="#b8b5a7" />
            </CheckMark>
            只显示标准层单层量
          </Choice>
        </Options>
        <GridFrame>
          <QuantityTable />
        </GridFrame>
      </FrameArea>
      <Footer>
        <PushButton type="button">
          设置分类及工程量(<u>S</u>)
        </PushButton>
        <PushButton type="button">
          导出到<u>E</u>xcel
        </PushButton>
        <PushButton type="button">
          导出到已有E<u>x</u>cel
        </PushButton>
      </Footer>
    </Dialog>
  );
}

/*
  Red arrows running over the panels and the dialog
*/
const Overlay = styled.svg`
  position: fixed;
  inset: 0;
  width: 100%;
  height: 100%;
  pointer-events: none;
`;

function Arrows() {
  return (
    <Overlay aria-hidden="true">
      <defs>
        <marker id="head" markerUnits="userSpaceOnUse" markerWidth="18" markerHeight="12" refX="1" refY="6" orient="auto">
          <path d="M0 0l17 6-17 6z" fill="#f80606" />
        </marker>
      </defs>
      <g stroke="#f80606" strokeWidth="3">
        <line x1="184" y1="290" x2="417" y2="301" markerEnd="url(#head)" />
        <line x1="486" y1="320" x2="716" y2="456" markerEnd="url(#head)" />
        <line x1="751" y1="570" x2="796" y2="468" markerEnd="url(#head)" />
      </g>
    </Overlay>
  );
}

export default function App() {
  return (
    <Page>
      <GlobalStyle />
      <TopEdge />
      <ToolRow $gap={12}>
        <Toolbar>
          <Grip $after={5} />
          <Tool icon="define" label="定义" />
          <Divider />
          <Tool icon="sum" label="汇总计算" />
          <Divider />
          <Tool icon="glasses" label="查看工程量" pressed />
          <Tool icon="formula" label="查看计算式" />
          <Tool icon="batch" label="批量选择" disabled />
          <Tool icon="slab" label="平齐板顶" disabled />
        </Toolbar>
        <Toolbar>
          <Grip $after={5} />
          <Dropdown label="楼层范围" value="当前楼层" width={78} />
          <Tool icon="cube" label="俯视" caret />
          <Tool icon="view3d" label="三维" />
          <Tool icon="part3d" label="局部三维" />
          <Divider />
          <Tool icon="full" label="全屏" />
          <Tool icon="zoom" label="缩放" caret />
          <Tool icon="hand" label="平移" caret />
          <Tool icon="orbit" label="屏幕旋转" caret />
          <Divider />
          <Tool icon="display" label="构件图元显示设置" />
        </Toolbar>
      </ToolRow>
      <Workspace>
        <Sliver>
          <SliverHead>
            <Icon name="pin" size={11} box={11} />
            <Icon name="close" size={11} box={11} />
          </SliverHead>
          <DockGap $height={2} />
          <SliverCell $height={22} />
          <SliverCell $height={22} />
          <SliverCell $height={27} />
          <SliverBody />
        </Sliver>
        <Docks>
          <ComponentList />
          <DockGap $height={7} />
          <PropertyEditor />
        </Docks>
        <Main>
          <ToolRow>
            <Toolbar>
              <Grip $after={4} />
              <Dropdown label="楼层" value="基础层" width={55} />
              <Dropdown label="类别" value="基础" width={66} />
              <Dropdown label="构件类型" value="桩承台" width={66} />
              <Dropdown label="构件" value="ZCT-3" width={66} latin />
              <Divider />
              <Tool icon="property" label="属性" pressed />
              <Tool icon="list" label="构件列表" pressed />
              <Tool icon="dropper" label="拾取构件" />
            </Toolbar>
            <Toolbar>
              <Grip />
              <Tool icon="twoPoint" label="两点" />
              <Tool icon="parallel" label="平行" />
              <Tool icon="length" label="长度标注" />
              <Tool icon="aligned" label="对齐标注" />
              <Tool icon="measure" label="测量距离" />
            </Toolbar>
          </ToolRow>
          <ToolRow $gap={74}>
            <Toolbar>
              <Grip />
              <Tool icon="cursor" label="选择" caret />
              <Divider />
              <Tool icon="point" label="点" />
              <Tool icon="rotatePoint" label="旋转点" />
              <Divider />
              <Tool icon="smart" label="智能布置" caret />
              <Divider />
              <Tool icon="eccentric" label="设置偏心桩承台" caret />
              <Divider />
              <Tool icon="earth" label="自动生成土方" />
              <Divider />
              <Tool icon="slopeSet" label="设置所有边坡" caret />
              <Tool icon="slopeClear" label="取消所有边坡" caret />
            </Toolbar>
            <Toolbar>
              <Grip />
              <Tool icon="extract" label="从模型提取工程量" disabled />
            </Toolbar>
          </ToolRow>
          <Stage>
            <EditTools />
            <Canvas>
              <Plan />
              <QuantityDialog />
            </Canvas>
          </Stage>
        </Main>
      </Workspace>
      <Arrows />
    </Page>
  );
}
